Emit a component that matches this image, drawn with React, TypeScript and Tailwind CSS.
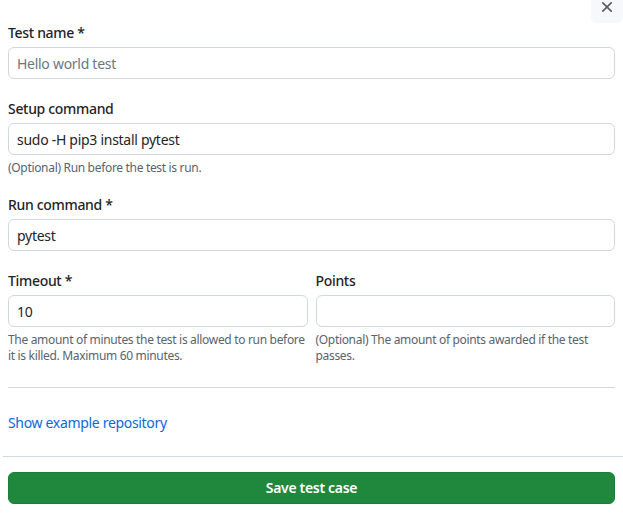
import React from "react";

const font = { fontFamily: '"Noto Sans", "Open Sans", sans-serif' };

function Label({ children }: { children: React.ReactNode }) {
  return (
    <label className="block text-sm leading-5 font-medium text-[#1f2328]">
      {children}
    </label>
  );
}

function Input({ value, placeholder }: { value?: string; placeholder?: string }) {
  return (
    <input
      defaultValue={value}
      placeholder={placeholder}
      className="mt-1 block w-full h-8 rounded-md border border-[#d0d7de] bg-white px-2 text-sm tracking-[-0.02em] text-[#1f2328] placeholder:text-[#6e7781] outline-none"
    />
  );
}

function Note({ children }: { children: React.ReactNode }) {
  return <p className="mt-[5px] text-xs leading-4 text-[#59636e]">{children}</p>;
}

export default function App() {
  return (
    <div className="w-[623px] h-[530px] bg-white overflow-hidden tracking-[-0.02em]" style={font}>
      {/* close */}
      <div className="flex justify-end h-[23px]">
        <button className="-mt-[9px] w-8 h-8 shrink-0 rounded-md bg-[#f6f8fa] flex items-center justify-center text-[#57606a]">
          <svg width="18" height="18" viewBox="0 0 16 16" fill="currentColor">
            <path d="M3.72 3.72a.75.75 0 0 1 1.06 0L8 6.94l3.22-3.22a.749.749 0 0 1 1.275.326.749.749 0 0 1-.215.734L9.06 8l3.22 3.22a.749.749 0 0 1-.326 1.275.749.749 0 0 1-.734-.215L8 9.06l-3.22 3.22a.751.751 0 0 1-1.042-.018.751.751 0 0 1-.018-1.042L6.94 8 3.72 4.78a.75.75 0 0 1 0-1.06Z" />
          </svg>
        </button>
      </div>

      <div className="pl-2 pr-2">
        <Label>Test name *</Label>
        <Input placeholder="Hello world test" />

        <div className="mt-5">
          <Label>Setup command</Label>
          <Input value="sudo -H pip3 install pytest" />
          <Note>(Optional) Run before the test is run.</Note>
        </div>

        <div className="mt-[19px]">
          <Label>Run command *</Label>
          <Input value="pytest" />
        </div>

        <div className="mt-5 grid grid-cols-2 gap-2">
          <div>
            <Label>Timeout *</Label>
            <Input value="10" />
            <Note>
              The amount of minutes the test is allowed to run before it is
              killed. Maximum 60 minutes.
            </Note>
          </div>
          <div>
            <Label>Points</Label>
            <Input />
            <Note>(Optional) The amount of points awarded if the test passes.</Note>
          </div>
        </div>

        <hr className="mt-[23px] border-t border-[#d1d9e0]" />

        <a href="#" className="mt-[25px] block text-sm leading-5 text-[#0969da]">
          Show example repository
        </a>
      </div>

      <hr className="mt-[23px] ml-[3px] border-t border-[#d1d9e0]" />

      <div className="px-2 mt-[15px]">
        <button className="w-full h-8 rounded-md bg-[#1f883d] border border-[#1a7f37] text-sm font-semibold text-white">
          Save test case
        </button>
      </div>
    </div>
  );
}
